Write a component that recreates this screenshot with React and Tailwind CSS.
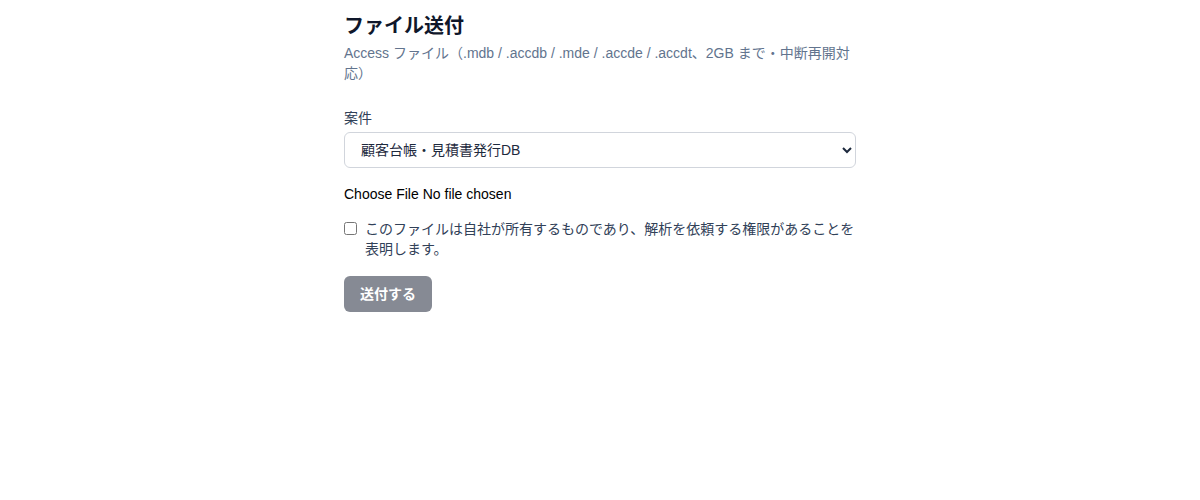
export default function App() {
  return (
    <div className="min-h-screen bg-white" style={{ fontFamily: '"Liberation Sans", "Noto Sans CJK JP", sans-serif' }}>
      <div className="mx-auto max-w-lg pt-[12px]">
        <h1 className="text-xl font-bold text-slate-900">ファイル送付</h1>
        <p className="mt-[3px] text-sm text-slate-500">
          Access ファイル（.mdb / .accdb / .mde / .accde / .accdt、2GB まで・中断再開対応）
        </p>

        <form className="mt-[25px] flex flex-col">
          <div>
            <label className="mb-1 block text-sm text-slate-700">案件</label>
            <select className="h-9 w-full rounded-md border border-gray-300 bg-white px-3 text-sm text-slate-800">
              <option>顧客台帳・見積書発行DB</option>
            </select>
          </div>

          <input type="file" className="mt-4 text-sm text-black" />

          <label className="mt-[15px] flex items-start gap-2 text-sm text-slate-700">
            <input type="checkbox" className="mt-[3px] h-[13px] w-[13px]" />
            <span>このファイルは自社が所有するものであり、解析を依頼する権限があることを表明します。</span>
          </label>

          <div className="mt-[17px]">
            <button type="button" disabled className="h-9 rounded-md bg-slate-900 px-4 text-sm font-semibold text-white opacity-50">
              送付する
            </button>
          </div>
        </form>
      </div>
    </div>
  )
}
